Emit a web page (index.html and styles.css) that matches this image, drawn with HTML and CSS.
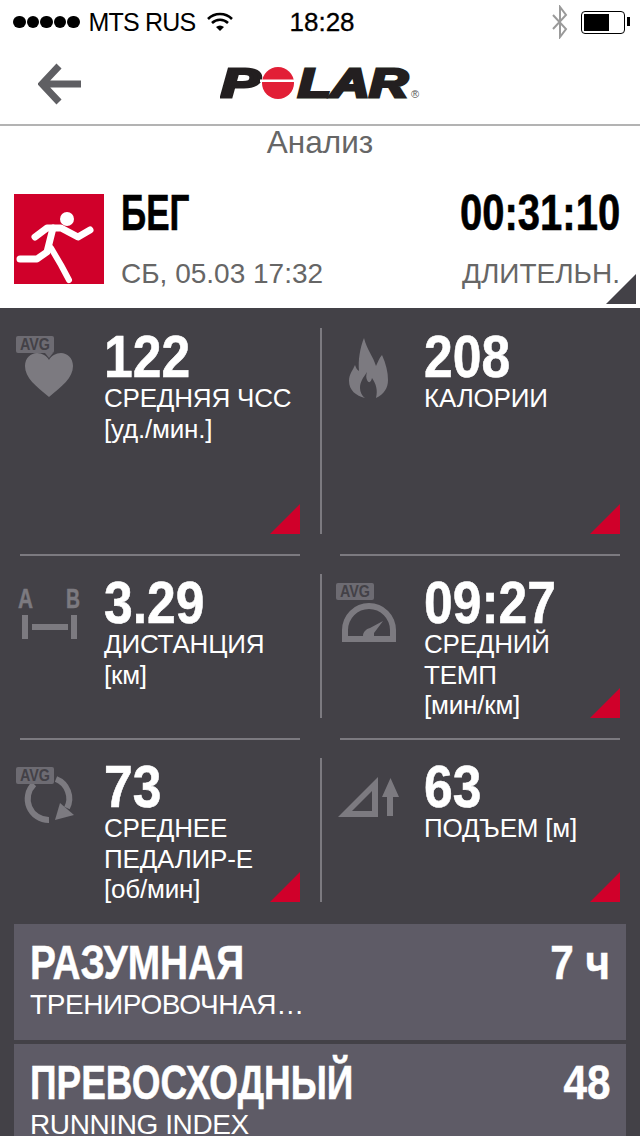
FILE: index.html

```html
<!DOCTYPE html>
<html lang="ru">
<head>
  <meta charset="UTF-8" />
  <meta name="viewport" content="width=device-width, initial-scale=1.0"/>
  <title>Polar</title>
  <link rel="stylesheet" href="styles.css">
</head>
<body>

<div class="status-bar">
  <div class="dots"><i></i><i></i><i></i><i></i><i></i></div>
  <span class="carrier">MTS RUS</span>
  <svg class="wifi" width="26" height="20" viewBox="0 0 26 20">
    <path d="M1 7 A17 17 0 0 1 25 7" fill="none" stroke="#000" stroke-width="2.6"/>
    <path d="M5 11 A11.5 11.5 0 0 1 21 11" fill="none" stroke="#000" stroke-width="2.6"/>
    <path d="M9 15 A6 6 0 0 1 17 15 L13 19 Z" fill="#000"/>
  </svg>
  <span class="clock">18:28</span>
  <svg class="bluetooth" width="16" height="34" viewBox="0 0 16 34">
    <path d="M1 10 L14 24 L8 32 V2 L14 10 L1 24" fill="none" stroke="#9a9a9a" stroke-width="2"/>
  </svg>
  <div class="battery"><div class="battery-fill"></div></div>
</div>

<div class="header">
  <svg class="back" width="44" height="42" viewBox="0 0 44 42">
    <path d="M21 3 L4 21 L21 39 M4 21 H43" fill="none" stroke="#5f5f63" stroke-width="7"/>
  </svg>
  <svg class="logo" width="200" height="50" viewBox="0 -8 200 50">
    <g class="logo-text">
      <text x="1" y="30" textLength="39" lengthAdjust="spacingAndGlyphs">P</text>
      <text x="78" y="30" textLength="110" lengthAdjust="spacingAndGlyphs">LAR</text>
    </g>
    <circle cx="58" cy="16" r="16" fill="#e21f36"/>
    <rect x="40" y="12.5" width="36" height="2.5" fill="#fff"/>
    <text class="logo-mark" x="191" y="31">®</text>
  </svg>
</div>

<div class="page-title">Анализ</div>

<div class="summary">
  <svg class="sport-icon" width="90" height="90" viewBox="0 0 90 90">
    <rect width="90" height="90" fill="#d0002a"/>
    <circle cx="53" cy="25" r="7" fill="#fff"/>
    <g fill="none" stroke="#fff" stroke-width="7" stroke-linecap="round" stroke-linejoin="round">
      <path d="M21 43 L33 34 H47 L64 43 L76 36"/>
      <path d="M39 34 L33 58 L23 65 H6"/>
      <path d="M37 54 L47 71 L55 86" stroke-width="6"/>
    </g>
  </svg>
  <div class="summary-left">
    <div class="sport-name">БЕГ</div>
    <div class="sport-date">СБ, 05.03 17:32</div>
  </div>
  <div class="summary-right">
    <div class="duration">00:31:10</div>
    <div class="duration-label">ДЛИТЕЛЬН.</div>
  </div>
  <div class="corner corner-dark"></div>
</div>

<div class="panel">
  <div class="stat-row stat-row-tall">
    <div class="stat">
      <svg class="stat-icon" width="104" height="80" viewBox="0 0 104 80">
        <path class="ic" d="M49 69 C36 58 25 50 25 38 C25 30 31 25 37 25 C42 25 47 28 49 32 C51 28 56 25 61 25 C67 25 73 30 73 38 C73 50 62 58 49 69Z"/>
        <rect class="badge" x="16" y="8" width="38" height="17" rx="2"/>
        <path class="badge" d="M45 25 H53 L49 30 Z"/>
        <text class="badge-text" x="35" y="22" textLength="30" lengthAdjust="spacingAndGlyphs">AVG</text>
      </svg>
      <div class="stat-text">
        <div class="value">122</div>
        <div class="label">СРЕДНЯЯ ЧСС</div>
        <div class="label">[уд./мин.]</div>
      </div>
      <div class="corner"></div>
    </div>
    <div class="stat">
      <svg class="stat-icon" width="104" height="80" viewBox="0 0 104 80">
        <path class="ic" fill-rule="evenodd" d="M44 10 C47 22 53 28 56 38 C58 34 59 30 62 27 C66 36 68 44 68 52 C68 60 64 66 56 70 C58 62 56 56 52 50 C51 54 49 56 47 52 C46 50 46 47 47 44 C43 50 40 54 40 60 C40 64 42 68 45 70 C36 68 29 62 29 53 C29 46 33 42 35 37 C36 40 37 42 39 43 C38 32 40 20 44 10Z"/>
      </svg>
      <div class="stat-text">
        <div class="value">208</div>
        <div class="label">КАЛОРИИ</div>
      </div>
      <div class="corner"></div>
    </div>
  </div>

  <div class="rules"><hr><hr></div>

  <div class="stat-row">
    <div class="stat">
      <svg class="stat-icon" width="104" height="80" viewBox="0 0 104 80">
        <text class="ab-text" x="25.500" y="34" textLength="15" lengthAdjust="spacingAndGlyphs">A</text>
        <text class="ab-text" x="73" y="34" textLength="14" lengthAdjust="spacingAndGlyphs">B</text>
        <rect class="ic" x="22" y="41" width="6" height="24"/>
        <rect class="ic" x="71" y="41" width="6" height="24"/>
        <rect class="ic" x="32" y="50" width="36" height="6"/>
      </svg>
      <div class="stat-text">
        <div class="value">3.29</div>
        <div class="label">ДИСТАНЦИЯ</div>
        <div class="label">[км]</div>
      </div>
    </div>
    <div class="stat">
      <svg class="stat-icon" width="104" height="80" viewBox="0 0 104 80">
        <path class="ic" fill-rule="evenodd" d="M22 68 V56 A27 27 0 0 1 76 56 V68 Z M28 62 H70 V56 A21 21 0 0 0 28 56 Z"/>
        <path class="ic" d="M43 62 C43 58 46 55 50 54 L63 47 L54 59 L54 62 Z"/>
        <rect class="badge" x="16" y="9" width="38" height="17" rx="2"/>
        <text class="badge-text" x="35" y="23" textLength="30" lengthAdjust="spacingAndGlyphs">AVG</text>
      </svg>
      <div class="stat-text">
        <div class="value">09:27</div>
        <div class="label">СРЕДНИЙ</div>
        <div class="label">ТЕМП</div>
        <div class="label">[мин/км]</div>
      </div>
      <div class="corner"></div>
    </div>
  </div>

  <div class="rules"><hr><hr></div>

  <div class="stat-row">
    <div class="stat">
      <svg class="stat-icon" width="104" height="80" viewBox="0 0 104 80">
        <path d="M34 26 A21 21 0 0 0 49 62" fill="none" stroke="#7c7a80" stroke-width="6"/>
        <path d="M56 21 A21 21 0 0 1 67 50" fill="none" stroke="#7c7a80" stroke-width="6"/>
        <path class="ic" d="M60 45 L74 57 L55 62 Z"/>
        <rect class="badge" x="16" y="9" width="38" height="17" rx="2"/>
        <text class="badge-text" x="35" y="23" textLength="30" lengthAdjust="spacingAndGlyphs">AVG</text>
      </svg>
      <div class="stat-text">
        <div class="value">73</div>
        <div class="label">СРЕДНЕЕ</div>
        <div class="label">ПЕДАЛИР-Е</div>
        <div class="label">[об/мин]</div>
      </div>
      <div class="corner"></div>
    </div>
    <div class="stat">
      <svg class="stat-icon" width="104" height="80" viewBox="0 0 104 80">
        <path class="ic" fill-rule="evenodd" d="M18 59 L58 19 V59 Z M32 53 H52 V33 Z"/>
        <path class="ic" d="M70.500 20 L79 39 H73 V58 H67 V39 H62 Z"/>
      </svg>
      <div class="stat-text">
        <div class="value">63</div>
        <div class="label">ПОДЪЕМ [м]</div>
      </div>
      <div class="corner"></div>
    </div>
  </div>

  <div class="card">
    <div class="card-main">
      <div class="card-title squeeze-81">РАЗУМНАЯ</div>
      <div class="card-sub">ТРЕНИРОВОЧНАЯ…</div>
    </div>
    <div class="card-value">7 ч</div>
  </div>
  <div class="card">
    <div class="card-main">
      <div class="card-title squeeze-77">ПРЕВОСХОДНЫЙ</div>
      <div class="card-sub">RUNNING INDEX</div>
    </div>
    <div class="card-value">48</div>
  </div>
</div>

</body>
</html>
```

FILE: styles.css

```css
html, body {
  margin: 0;
  padding: 0;
  height: 1136px;
  overflow: hidden;
  background: #fff;
  font-family: 'Liberation Sans', Arial, sans-serif;
}

/* status bar */
.status-bar {
  display: flex;
  align-items: center;
  height: 44px;
  padding-left: 13px;
  color: #000;
  font-size: 26px;
}

.dots {
  display: flex;
  gap: 1px;
}

.dots i {
  display: block;
  width: 12.500px;
  height: 12.500px;
  border-radius: 50%;
  background: #000;
}

.carrier {
  margin-left: 9px;
  width: 106px;
  font-size: 25px;
  letter-spacing: -0.8px;
  white-space: nowrap;
}

.wifi {
  margin-left: 12px;
}

.clock {
  margin-left: 57px;
  -webkit-text-stroke: 0.3px #000;
}

.bluetooth {
  margin-left: auto;
}

.battery {
  position: relative;
  box-sizing: border-box;
  width: 44px;
  height: 23px;
  margin: 0 15px 0 13px;
  padding: 2px;
  border: 1.500px solid #000;
  border-radius: 4px;
}

.battery::after {
  content: "";
  position: absolute;
  right: -6px;
  top: 5px;
  width: 3px;
  height: 9px;
  background: #000;
}

.battery-fill {
  width: 25px;
  height: 100%;
  background: #000;
}

/* header */
.header {
  position: relative;
  display: flex;
  align-items: center;
  height: 80px;
  border-bottom: 2px solid #b3b3b3;
  padding-left: 38px;
}

.logo {
  position: absolute;
  left: 220px;
  top: 15px;
}

.logo-text text {
  font-weight: bold;
  font-style: italic;
  font-size: 40px;
  fill: #231f20;
  stroke: #231f20;
  stroke-width: 3px;
}

.logo-mark {
  font-size: 11px;
  fill: #555;
}

.page-title {
  text-align: center;
  color: #666;
  font-size: 31.500px;
  line-height: 32px;
  padding-bottom: 2px;
}

/* summary */
.summary {
  position: relative;
  display: flex;
  height: 148px;
  padding: 34px 20px 0 14px;
  box-sizing: border-box;
}

.summary-left {
  margin-left: 17px;
}

.summary-right {
  margin-left: auto;
  text-align: right;
}

.sport-name,
.duration {
  font-weight: bold;
  font-size: 50px;
  line-height: 38px;
  color: #000;
  -webkit-text-stroke: 0.6px #000;
}

.sport-name {
  transform: scaleX(0.7);
  transform-origin: left;
}

.duration {
  transform: scaleX(0.8);
  transform-origin: right;
}

.sport-date,
.duration-label {
  margin-top: 26px;
  font-size: 28px;
  line-height: 32px;
  color: #666;
}

.corner {
  position: absolute;
  right: 20px;
  bottom: 0;
  width: 30px;
  height: 30px;
  background: #d0002a;
  clip-path: polygon(100% 0, 100% 100%, 0 100%);
}

.corner-dark {
  right: 4px;
  bottom: 4px;
  background: #434147;
}

/* dark panel */
.panel {
  background: #434147;
  height: 828px;
  padding-top: 20px;
  box-sizing: border-box;
  overflow: hidden;
}

.stat-row {
  display: flex;
  height: 144px;
}

.stat-row-tall {
  height: 206px;
}

.stat {
  position: relative;
  display: flex;
  width: 320px;
}

.stat + .stat::before {
  content: "";
  position: absolute;
  left: 0;
  top: 0;
  bottom: 0;
  width: 2px;
  background: #7c7a80;
}

.stat-icon {
  flex: none;
  width: 104px;
}

.ic {
  fill: #7c7a80;
}

.badge {
  fill: #6d6b72;
}

.badge-text {
  font-weight: bold;
  font-size: 16px;
  text-anchor: middle;
  fill: #434147;
}

.ab-text {
  font-weight: bold;
  font-size: 27px;
  text-anchor: middle;
  fill: #7c7a80;
  stroke: #7c7a80;
  stroke-width: 0.5px;
}

.value {
  font-weight: bold;
  font-size: 60px;
  line-height: 53px;
  padding-top: 2px;
  color: #fff;
  -webkit-text-stroke: 0.6px #fff;
  transform: scaleX(0.86);
  transform-origin: left;
}

.label {
  font-size: 26px;
  line-height: 30.500px;
  letter-spacing: -0.2px;
  color: #fff;
  white-space: nowrap;
}

.rules {
  display: flex;
  gap: 40px;
  padding: 20px 20px 18px;
}

.rules hr {
  flex: 1;
  height: 2px;
  margin: 0;
  border: 0;
  background: #7c7a80;
}

/* cards */
.card {
  display: flex;
  justify-content: space-between;
  height: 116px;
  margin: 4px 14px 0;
  padding: 12px 16px 0;
  box-sizing: border-box;
  background: #5e5b66;
  color: #fff;
}

.stat-row + .card {
  margin-top: 22px;
}

.card-title,
.card-value {
  font-weight: bold;
  font-size: 48px;
  line-height: 54px;
  -webkit-text-stroke: 0.5px #fff;
}

.card-title {
  transform-origin: left;
}

.squeeze-81 {
  transform: scaleX(0.81);
}

.squeeze-77 {
  transform: scaleX(0.77);
}

.card-value {
  transform: scaleX(0.88);
  transform-origin: right;
}

.card-sub {
  font-size: 28px;
  line-height: 30px;
  letter-spacing: -0.4px;
  white-space: nowrap;
}
```
